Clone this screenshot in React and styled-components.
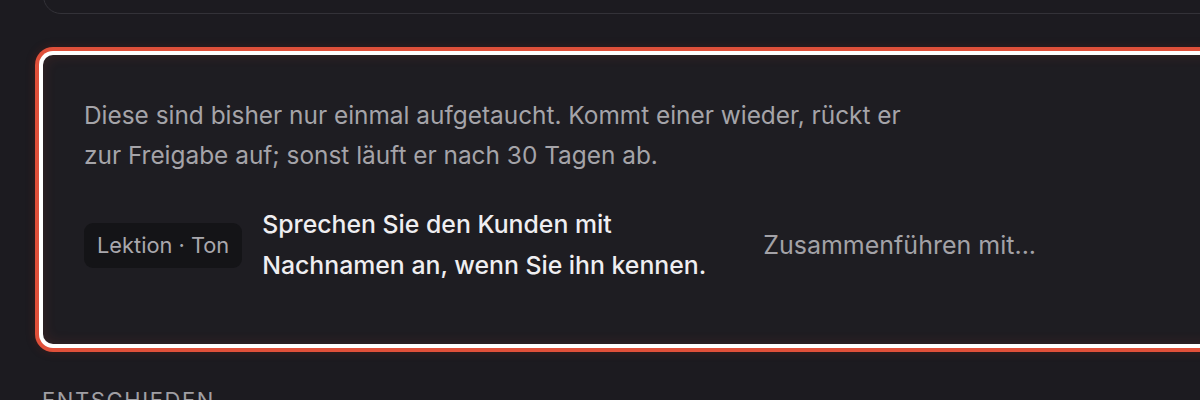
import React from 'react';
import styled, { createGlobalStyle } from 'styled-components';

const Global = createGlobalStyle`
	html, body {
		margin: 0;
		padding: 0;
		background: #1c1b20;
		overflow: hidden;
	}
	body {
		font-family: Inter, "Noto Sans", sans-serif;
		-webkit-font-smoothing: antialiased;
	}
`;

const styles = {
	page: styled.div`
		display: flex;
		flex-direction: column;
		width: 1240px;
		padding-left: 43px;
	`,
	prevCard: styled.div`
		flex: none;
		height: 40px;
		margin-top: -28px;
		border: 1px solid #333238;
		border-radius: 18px;
		background: #1c1b20;
	`,
	card: styled.div`
		flex: none;
		margin-top: 41px;
		height: 289px;
		box-sizing: border-box;
		padding: 40px 41px 0;
		border-radius: 10px;
		background: #1e1d22;
		box-shadow:
			inset 0 0 14px rgba(226, 80, 58, 0.14),
			0 0 0 4px #ffffff,
			0 0 0 8px #e0503a,
			0 0 10px 8px rgba(150, 40, 25, 0.25);
	`,
	description: styled.p`
		margin: 0;
		max-width: 860px;
		font-size: 24.4px;
		line-height: 40px;
		color: #a5a4a9;
	`,
	row: styled.div`
		display: flex;
		align-items: center;
		margin-top: 29px;
	`,
	badge: styled.span`
		flex: none;
		display: inline-flex;
		align-items: center;
		height: 45px;
		padding: 0 13px;
		border-radius: 9px;
		background: #141417;
		color: #a9a8ad;
		font-size: 21.8px;
	`,
	lesson: styled.div`
		flex: none;
		width: 460px;
		margin-left: 20px;
		font-size: 24.8px;
		line-height: 41px;
		font-weight: 500;
		color: #efeef1;
	`,
	merge: styled.div`
		margin-left: 41px;
		font-size: 25px;
		color: #a3a2a7;
	`,
	sectionTitle: styled.h3`
		flex: none;
		margin: 43px 0 0 -1px;
		font-size: 22px;
		font-weight: 400;
		letter-spacing: 1.6px;
		text-transform: uppercase;
		color: #a09fa4;
	`,
};

export default function App() {
	return (
		<>
			<Global />
			<styles.page>
				<styles.prevCard />
				<styles.card>
					<styles.description>
						Diese sind bisher nur einmal aufgetaucht. Kommt einer wieder, rückt er
						zur Freigabe auf; sonst läuft er nach 30 Tagen ab.
					</styles.description>
					<styles.row>
						<styles.badge>Lektion · Ton</styles.badge>
						<styles.lesson>Sprechen Sie den Kunden mit Nachnamen an, wenn Sie ihn kennen.</styles.lesson>
						<styles.merge>Zusammenführen mit...</styles.merge>
					</styles.row>
				</styles.card>
				<styles.sectionTitle>Entschieden</styles.sectionTitle>
			</styles.page>
		</>
	);
}
